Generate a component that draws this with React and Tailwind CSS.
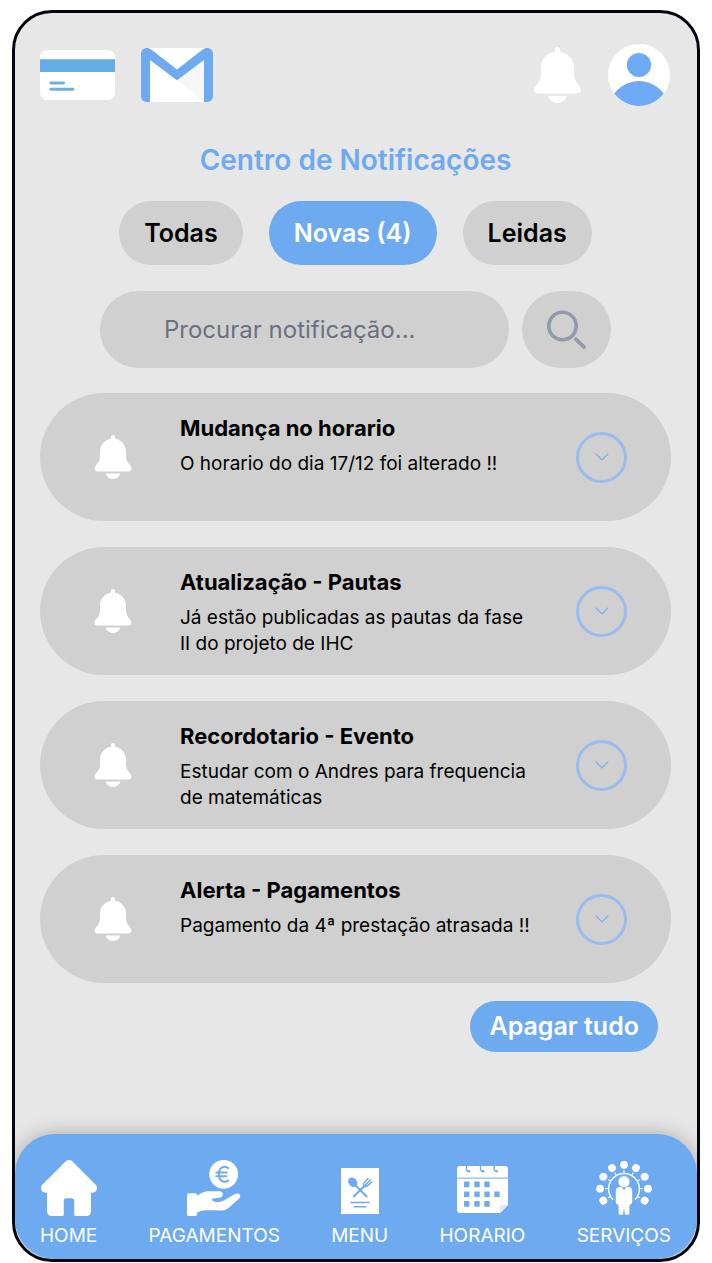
import React from "react";

const notifications = [
  { title: "Mudança no horario", text: "O horario do dia 17/12 foi alterado !!" },
  { title: "Atualização - Pautas", text: "Já estão publicadas as pautas da fase II do projeto de IHC" },
  { title: "Recordotario - Evento", text: "Estudar com o Andres para frequencia de matemáticas" },
  { title: "Alerta - Pagamentos", text: "Pagamento da 4ª prestação atrasada !!" },
];

function BellIcon({ className }) {
  return (
    <svg viewBox="0 0 47 56" className={className} fill="#fff" aria-hidden="true">
      <path d="M23.5 0c1.6 0 2.6 1 2.6 2.4v2.3C34 5.8 40 12.5 40 20.5V26c0 5 1.2 8 4 11.200c1.700 1.900 3 3.600 3 5.500c0 2.200-1.500 3.800-3.700 3.800H3.700C1.500 46.500 0 44.900 0 42.700c0-1.900 1.300-3.600 3-5.500C5.800 34 7 31 7 26v-5.500C7 12.500 13 5.800 20.900 4.700V2.400C20.900 1 21.900 0 23.500 0z" />
      <path d="M14.500 49h18c-.6 4-4.300 7-9 7s-8.400-3-9-7z" />
    </svg>
  );
}

function CreditCardIcon() {
  return (
    <svg viewBox="0 0 75 50" className="h-[50px] w-[75px]" aria-hidden="true">
      <rect width="75" height="50" rx="7" fill="#fff" />
      <path d="M0 9.300h75v12.700H0z" fill="#65aee4" />
      <path d="M10.800 33h12.800M10.800 39.300h22.200" stroke="#70afe0" strokeWidth="2.900" strokeLinecap="round" />
    </svg>
  );
}

function MailIcon() {
  return (
    <svg viewBox="0 0 72 54" className="h-[54px] w-[72px]" aria-hidden="true">
      <path d="M6 0h60v54H6z" fill="#fff" />
      <path d="M36 32L63 12v42z" fill="#f7f7f7" />
      <path d="M6 0c1.700 0 3 .6 4.200 1.500L36 21.500l25.800-20C63 .6 64.300 0 66 0c3.500 0 6 2.600 6 6v42c0 3.400-2.600 6-6 6h-3V12L36 32.200 9 12v42H6c-3.400 0-6-2.600-6-6V6c0-3.400 2.500-6 6-6z" fill="#6eaaef" />
    </svg>
  );
}

function AvatarIcon() {
  return (
    <svg viewBox="0 0 62 62" className="size-[62px]" aria-hidden="true">
      <circle cx="31" cy="31" r="31" fill="#fff" />
      <circle cx="31" cy="21" r="12.100" fill="#6faaf6" />
      <path d="M6.300 49.500C12 42 21 37 31 37s19 5 24.700 12.500C50 57 41 62 31 62S12 57 6.300 49.500z" fill="#6faaf6" />
    </svg>
  );
}

function SearchIcon() {
  return (
    <svg viewBox="0 0 40 40" className="size-10" fill="none" stroke="#949ba8" strokeLinecap="round" aria-hidden="true">
      <circle cx="15.500" cy="16" r="13.700" strokeWidth="3.600" />
      <path d="M28.800 29.200l8.200 8" strokeWidth="3.800" />
    </svg>
  );
}

function HomeIcon() {
  return (
    <svg viewBox="0 0 56 56" className="size-14" fill="#fff" aria-hidden="true">
      <path d="M24.800 1.300c1.800-1.700 4.600-1.700 6.400 0l23.500 23.500c.9.900 1.300 2 1.300 3.200c0 2.800-2 4.700-4.600 4.700H50V51c0 3-2 5-5 5H35c-1.200 0-1.800-.6-1.800-1.800V41c0-1.700-1-2.700-2.700-2.700h-5c-1.700 0-2.700 1-2.700 2.700v13.200c0 1.200-.6 1.800-1.800 1.800H11c-3 0-5-2-5-5V32.700H4.600C2 32.700 0 30.800 0 28c0-1.200.4-2.300 1.300-3.200z" />
    </svg>
  );
}

function PaymentsIcon() {
  return (
    <svg viewBox="0 0 54 56" className="h-14 w-[54px]" fill="none" aria-hidden="true">
      <circle cx="36.700" cy="14.300" r="14.400" fill="#fff" />
      <path d="M41.800 8.600c-1.200-1.200-2.600-1.800-4.200-1.800c-3.700 0-5.700 3.200-5.700 7.500s2 7.500 5.700 7.500c1.600 0 3-.6 4.200-1.800M28.500 12.500h12M28.500 16.200h11.500" stroke="#6eaaef" strokeWidth="2" />
      <path d="M1.800 33.200h6.400c1.200 0 1.900.7 1.900 1.800v.8C13 33.500 16.500 31.400 21 31.200c4 .1 8 0 11.500 0c2.200 0 3.500 1.300 3.300 3.300c-.2 2-1.300 2.900-3.300 3.200L26 38.500c-1 .2-1.200 1-.7 1.800c1.500 2.200 6 2.400 11 .5L47.500 34.200c2-1.200 4.200-1 5.200.3c1 1.500.7 3-.8 4.300l-9.500 8.400c-2.200 2-4.500 3.200-7.500 3.300c-6 .2-12.500-.5-18 0c-3 .2-5 1.200-6.800 2.300v1.400c0 1.200-.7 1.800-1.900 1.800H1.800C.6 56 0 55.300 0 54.200V35c0-1.200.6-1.800 1.800-1.800z" fill="#fff" />
    </svg>
  );
}

function MenuIcon() {
  return (
    <svg viewBox="0 0 38 46" className="mt-1.5 h-[46px] w-[38px]" fill="none" stroke="#6eaaef" strokeLinecap="round" aria-hidden="true">
      <path d="M0 0h38v46H0z" fill="#fff" stroke="none" />
      <ellipse cx="11.800" cy="14.200" rx="4.200" ry="5.200" transform="rotate(-42 11.800 14.200)" fill="#6eaaef" stroke="none" />
      <path d="M14 16.800l11.600 11.700M12.800 28.500L24 17.500" strokeWidth="1.900" />
      <path d="M27 10.500l-4.300 4.800c-1 2.200 1 4 3 3l5.100-4.200M29.200 12.100L24.600 17" strokeWidth="1.500" />
      <path d="M10 34.600h18M13.500 38.800h11.500" strokeWidth="1.500" />
    </svg>
  );
}

function CalendarIcon() {
  const cells = [[7, 15.6], [17.3, 15.6], [27.3, 15.6], [7, 25.4], [17.3, 25.4], [27.3, 25.4], [37.3, 25.4], [7, 35.1], [17.3, 35.1], [27.3, 35.1]];
  return (
    <svg viewBox="0 0 51 47" className="mt-0.5 h-[47px] w-[51px]" fill="none" aria-hidden="true">
      <path d="M3 0h45c1.800 0 3 1.200 3 3v36l-8 8H3c-1.800 0-3-1.200-3-3V3c0-1.800 1.200-3 3-3z" fill="#fff" />
      <path d="M43 47v-6c0-1.300.7-2 2-2h6z" fill="#e3e5e8" />
      <path d="M0 12.100h51" stroke="#6eaaef" strokeWidth="1" />
      <path d="M9.500 0v3c0 1.600 1 2.400 2.500 2.300M23.500 0v3c0 1.600 1 2.400 2.500 2.300M37.200 0v3c0 1.600 1 2.400 2.500 2.300" stroke="#6eaaef" strokeWidth="1.400" />
      {[12, 26, 39.700].map((x) => <circle key={x} cx={x} cy="5.200" r="1.300" fill="#6eaaef" />)}
      {cells.map(([x, y]) => <rect key={x + "-" + y} x={x} y={y} width="5.400" height="5.700" rx=".6" fill="#6eaaef" />)}
    </svg>
  );
}

function ServicesIcon() {
  return (
    <svg viewBox="0 0 56 56" className="size-14" fill="#fff" aria-hidden="true">
      <path d="M17 39.700A15.400 15.400 0 1 1 39 39.700" fill="none" stroke="#fff" strokeWidth="1.400" />
      {[-120, -90, -60, -30, 0, 30, 60, 90, 120].map((angle) => (
        <g key={angle} transform={`rotate(${angle} 28 28.700)`}>
          <circle cx="28" cy="4.800" r="3.900" />
          <path d="M27.500 10h1v3.500h-1z" />
        </g>
      ))}
      <path d="M23.500 27h2.500l2 3.300 2-3.300h2.500c2.400 0 3.700 1.500 3.700 4.200v10.300c0 1.900-.9 3-2.700 3.200L33.200 54.700h-4.200l-1-7.200-1 7.200h-4.200l-.3-10c-1.800-.2-2.700-1.300-2.700-3.200V31.200c0-2.700 1.300-4.200 3.700-4.200z" />
      <circle cx="28" cy="21.700" r="6" stroke="#6eaaef" strokeWidth=".8" />
    </svg>
  );
}

const navItems = [
  { label: "HOME", Icon: HomeIcon },
  { label: "PAGAMENTOS", Icon: PaymentsIcon },
  { label: "MENU", Icon: MenuIcon },
  { label: "HORARIO", Icon: CalendarIcon },
  { label: "SERVIÇOS", Icon: ServicesIcon },
];

function Notification({ title, text }) {
  return (
    <li className="flex min-h-32 items-center rounded-[64px] bg-[#d0d0d0] pr-11 pl-[54px]">
      <BellIcon className="h-11 w-[38px] shrink-0" />
      <div className="mr-10 ml-12 min-w-0 flex-1 self-start pt-[19px]">
        <h2 className="text-[22px] leading-8 font-bold">{title}</h2>
        <p className="mt-[7px] text-[19px] leading-[26px]">{text}</p>
      </div>
      <button type="button" aria-label={`Expandir ${title}`} className="flex size-[51px] shrink-0 items-center justify-center rounded-full border-3 border-[#98bcf0]">
        <svg viewBox="0 0 14 8" className="h-2 w-3.5" fill="none" stroke="#6faee8" strokeWidth="1.100" aria-hidden="true">
          <path d="M.7.7L7 7l6.300-6.300" />
        </svg>
      </button>
    </li>
  );
}

export default function App() {
  return (
    <div className="flex min-h-screen flex-col bg-white px-3 pt-2.5 pb-px font-['Inter','Liberation_Sans',sans-serif] text-black">
      <div className="flex flex-1 flex-col overflow-hidden rounded-[40px] border-3 border-[#04060f] bg-[#e7e7e7]">
        <header className="flex items-center justify-between pt-[31px] pr-[27px] pl-[25px]">
          <div className="flex items-center gap-[26px]">
            <a href="#pagamentos" aria-label="Pagamentos"><CreditCardIcon /></a>
            <a href="#correio" aria-label="Correio"><MailIcon /></a>
          </div>
          <div className="flex items-center gap-[27px]">
            <a href="#notificacoes" aria-label="Notificações"><BellIcon className="h-14 w-[47px]" /></a>
            <a href="#perfil" aria-label="Perfil"><AvatarIcon /></a>
          </div>
        </header>
        <main className="flex flex-col pr-[26px] pl-[25px]">
          <h1 className="mt-[34px] text-center text-[28px] leading-10 font-semibold text-[#6eaaef]">Centro de Notificações</h1>
          <div className="mt-[21px] flex justify-center gap-[26px] text-[25px] leading-10 font-semibold">
            <button type="button" className="rounded-full bg-[#d0d0d0] px-[25px] py-3">Todas</button>
            <button type="button" className="rounded-full bg-[#6eaaef] px-[25px] py-3 text-white">Novas (4)</button>
            <button type="button" className="rounded-full bg-[#d0d0d0] px-[25px] py-3">Leidas</button>
          </div>
          <form className="mx-[60px] mt-[26px] flex gap-[13px]" onSubmit={(e) => e.preventDefault()}>
            <input type="search" aria-label="Procurar notificação" placeholder="Procurar notificação..." className="h-[77px] min-w-0 flex-1 rounded-full bg-[#d0d0d0] px-16 text-2xl outline-none placeholder:text-[#6b7080]" />
            <button type="submit" aria-label="Procurar" className="flex w-[89px] items-center justify-center rounded-full bg-[#d0d0d0]"><SearchIcon /></button>
          </form>
          <ul className="mt-[25px] flex flex-col gap-[26px]">
            {notifications.map((n) => <Notification key={n.title} {...n} />)}
          </ul>
          <button type="button" className="mt-[18px] mr-[13px] self-end rounded-full bg-[#6eaaef] px-[19px] text-[25px] leading-[51px] font-semibold text-white">Apagar tudo</button>
        </main>
        <nav className="mt-auto flex justify-between rounded-[40px] bg-[#6eaaef] pt-[26px] pr-[26px] pb-[11px] pl-[25px] text-[19px] leading-[25px] text-white shadow-[0_0_20px_rgba(0,0,0,0.28)]">
          {navItems.map(({ label, Icon }) => (
            <a key={label} href={`#${label.toLowerCase()}`} className="flex flex-col items-center gap-[7px]">
              <span className="flex h-14 items-center"><Icon /></span>
              <span>{label}</span>
            </a>
          ))}
        </nav>
      </div>
    </div>
  );
}
